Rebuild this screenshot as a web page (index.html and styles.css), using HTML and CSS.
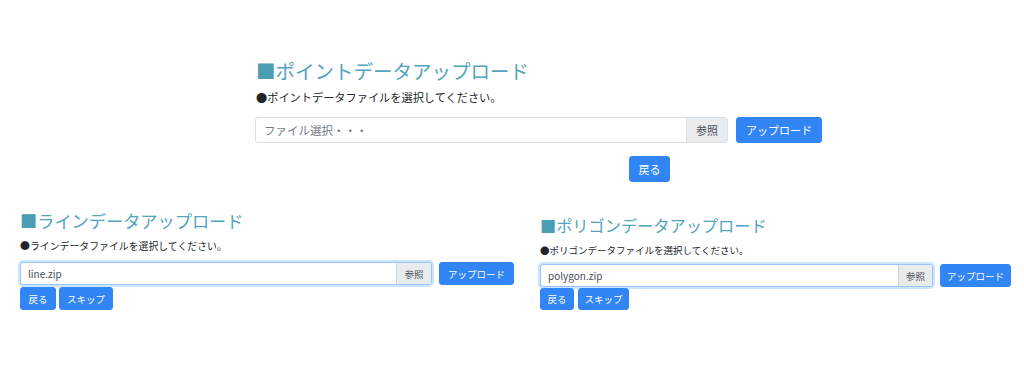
FILE: index.html
```html
<!DOCTYPE html>
<html lang="ja">
<head>
<meta charset="utf-8">
<title>データアップロード</title>
<link rel="stylesheet" href="styles.css">
</head>
<body>
<section class="top">
  <h2 class="title title-lg"><span class="sq">■</span>ポイントデータアップロード</h2>
  <p class="note note-lg">●ポイントデータファイルを選択してください。</p>
  <div class="row row-lg">
    <div class="file file-lg">
      <span class="file-label placeholder">ファイル選択・・・</span>
      <span class="file-btn">参照</span>
    </div>
    <button class="btn btn-upload-lg">アップロード</button>
  </div>
  <div class="back-row">
    <button class="btn btn-back-lg">戻る</button>
  </div>
</section>

<div class="bottom">
  <section class="sec sec-left">
    <h2 class="title title-md"><span class="sq">■</span>ラインデータアップロード</h2>
    <p class="note note-left">●ラインデータファイルを選択してください。</p>
    <div class="row row-left">
      <div class="file file-sm focus file-left">
        <span class="file-label">line.zip</span>
        <span class="file-btn">参照</span>
      </div>
      <button class="btn btn-sm btn-upload-left">アップロード</button>
    </div>
    <div class="btns btns-left">
      <button class="btn btn-sm btn-back-left">戻る</button>
      <button class="btn btn-sm btn-skip-left">スキップ</button>
    </div>
  </section>

  <section class="sec sec-right">
    <h2 class="title title-sm"><span class="sq">■</span>ポリゴンデータアップロード</h2>
    <p class="note note-right">●ポリゴンデータファイルを選択してください。</p>
    <div class="row row-right">
      <div class="file file-sm focus file-right">
        <span class="file-label">polygon.zip</span>
        <span class="file-btn">参照</span>
      </div>
      <button class="btn btn-sm btn-upload-right">アップロード</button>
    </div>
    <div class="btns btns-right">
      <button class="btn btn-sm btn-back-right">戻る</button>
      <button class="btn btn-sm btn-skip-right">スキップ</button>
    </div>
  </section>
</div>
</body>
</html>
```
FILE: styles.css
```css
* { box-sizing: border-box; }
html, body { margin: 0; padding: 0; background: #fff; }
body {
  font-family: "Noto Sans CJK JP", "Liberation Sans", sans-serif;
  color: #212529;
  width: 1024px;
  height: 368px;
  overflow: hidden;
}

.title {
  margin: 0;
  font-weight: 400;
  color: #52a3bc;
  white-space: nowrap;
}
.sq { color: #4a9db3; }
.note { margin: 0; color: #212529; white-space: nowrap; }

/* top section */
.top {
  padding-top: 56px;
  margin-left: 256px;
  height: 181px;
}
.title-lg { font-size: 19.5px; line-height: 29px; }
.note-lg { font-size: 11.2px; line-height: 14px; margin-top: 5px; }

.row { display: flex; align-items: flex-start; }
.row-lg { margin-top: 13px; margin-left: -1px; }

.file {
  display: flex;
  align-items: stretch;
  border: 1px solid #dcdfe3;
  border-radius: 3px;
  background: #fff;
  overflow: hidden;
}
.file-label {
  flex: 1;
  display: flex;
  align-items: center;
  color: #495057;
}
.placeholder { color: #737b83; }
.file-btn {
  display: flex;
  align-items: center;
  justify-content: center;
  background: #e9ecef;
  border-left: 1px solid #dcdfe3;
  color: #495057;
}
.file-lg { width: 473px; height: 26px; font-size: 11.5px; }
.file-lg .file-label { padding-left: 8px; }
.file-lg .file-btn { width: 41px; font-size: 11px; }

.btn {
  border: 1px solid #3285f5;
  background: #3285f5;
  color: #fff;
  font-family: inherit;
  padding: 0;
  border-radius: 3px;
  cursor: pointer;
}
.btn-upload-lg { margin-left: 8px; width: 86px; height: 26px; font-size: 11px; }
.back-row { margin-top: 12px; padding-left: 373px; }
.btn-back-lg { width: 41px; height: 26px; font-size: 11px; }

/* bottom sections */
.bottom { display: flex; align-items: flex-start; }
.sec-left { margin-left: 20px; padding-top: 29px; width: 520px; }
.sec-right { padding-top: 34px; }

.title-md { font-size: 17.2px; line-height: 22px; }
.title-sm { font-size: 16.2px; line-height: 21px; }
.note-left { font-size: 9.9px; line-height: 12px; margin-top: 8px; }
.note-right { font-size: 9.5px; line-height: 12px; margin-top: 8px; }

.row-left { margin-top: 10px; }
.row-right { margin-top: 8px; }

.file-sm { height: 23px; font-size: 10px; }
.file-sm.focus {
  border-color: #98c6fb;
  box-shadow: 0 0 0 2px rgba(0, 123, 255, 0.2);
}
.file-sm .file-label { padding-left: 7px; }
.file-sm .file-btn { font-size: 9.5px; border-left-color: #cfd8e2; }
.file-left { width: 412px; }
.file-left .file-btn { width: 35px; }
.file-right { width: 393px; }
.file-right .file-btn { width: 34px; }

.btn-sm { height: 23px; font-size: 9.5px; }
.btn-upload-left { margin-left: 7px; width: 75px; }
.btn-upload-right { margin-left: 7px; width: 71px; }

.btns { display: flex; }
.btns-left { gap: 3px; margin-top: 2px; }
.btns-right { gap: 4px; margin-top: 1px; }
.btn-back-left { width: 36px; }
.btn-skip-left { width: 54px; }
.btn-back-right { width: 34px; height: 22px; }
.btn-skip-right { width: 51px; height: 22px; }
```
